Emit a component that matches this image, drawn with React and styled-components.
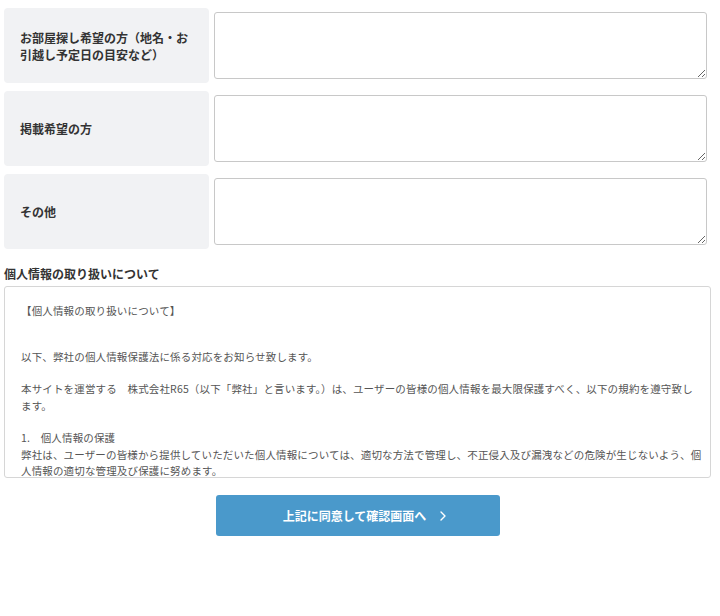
import styled, { createGlobalStyle } from 'styled-components';

const GlobalStyle = createGlobalStyle`
  body {
    margin: 0;
    background: #fff;
    font-family: "Noto Sans CJK JP", "Noto Sans", sans-serif;
    color: #333;
  }
`;

const Page = styled.div`
  width: 707px;
  padding: 8px 0 0 4px;
`;

const Fields = styled.div`
  display: flex;
  flex-direction: column;
  gap: 8px;
`;

const Row = styled.div`
  display: flex;
  gap: 5px;
`;

const Label = styled.div`
  width: 205px;
  height: 75px;
  box-sizing: border-box;
  padding: 0 16px;
  display: flex;
  align-items: center;
  background: #f1f2f4;
  border-radius: 4px;
  font-size: 12px;
  font-weight: 700;
  line-height: 17px;
  color: #333;
`;

const Textarea = styled.textarea`
  width: 493px;
  height: 67px;
  margin-top: 4px;
  box-sizing: border-box;
  border: 1px solid #c8c8c8;
  border-radius: 3px;
  padding: 6px 8px;
  font-family: inherit;
  font-size: 12px;
  resize: vertical;
`;

const SectionTitle = styled.h3`
  margin: 16px 0 4px;
  font-size: 12px;
  font-weight: 700;
  line-height: 17px;
  color: #333;
`;

const PolicyBox = styled.div`
  width: 707px;
  height: 192px;
  box-sizing: border-box;
  border: 1px solid #d6d6d6;
  border-radius: 3px;
  padding: 16px 6px 0 16px;
  overflow-y: auto;
  scrollbar-width: none;
  font-size: 10.5px;
  letter-spacing: 0.15px;
  line-height: 16.5px;
  color: #555;
`;

const Para = styled.p`
  margin: 0 0 ${({ $gap }) => $gap ?? 16}px;
`;

const ButtonWrap = styled.div`
  display: flex;
  justify-content: center;
  margin-top: 17px;
`;

const SubmitButton = styled.button`
  width: 284px;
  height: 41px;
  border: 0;
  border-radius: 3px;
  background: #4a99cb;
  color: #fff;
  font-family: inherit;
  font-size: 12px;
  font-weight: 700;
  line-height: 17px;
  display: flex;
  align-items: center;
  justify-content: center;
  gap: 14px;
  padding: 0 0 0 14px;
  cursor: pointer;
`;

const fields = [
  'お部屋探し希望の方（地名・お引越し予定日の目安など）',
  '掲載希望の方',
  'その他'
];

export default function App() {
  return (
    <>
      <GlobalStyle />
      <Page>
        <Fields>
          {fields.map((label) => (
            <Row key={label}>
              <Label>{label}</Label>
              <Textarea />
            </Row>
          ))}
        </Fields>

        <SectionTitle>個人情報の取り扱いについて</SectionTitle>
        <PolicyBox>
          <Para $gap={29}>【個人情報の取り扱いについて】</Para>
          <Para>以下、弊社の個人情報保護法に係る対応をお知らせ致します。</Para>
          <Para>
            本サイトを運営する　株式会社R65（以下「弊社」と言います。）は、ユーザーの皆様の個人情報を最大限保護すべく、以下の規約を遵守致し
            <br />
            ます。
          </Para>
          <Para $gap={0}>
            1.　個人情報の保護
            <br />
            弊社は、ユーザーの皆様から提供していただいた個人情報については、適切な方法で管理し、不正侵入及び漏洩などの危険が生じないよう、個
            <br />
            人情報の適切な管理及び保護に努めます。
          </Para>
        </PolicyBox>

        <ButtonWrap>
          <SubmitButton type="button">
            <span>上記に同意して確認画面へ</span>
            <svg width="6" height="10" viewBox="0 0 6 10" fill="none">
              <path d="M1 1l4 4-4 4" stroke="#fff" strokeWidth="1.4" strokeLinecap="round" strokeLinejoin="round" />
            </svg>
          </SubmitButton>
        </ButtonWrap>
      </Page>
    </>
  );
}
